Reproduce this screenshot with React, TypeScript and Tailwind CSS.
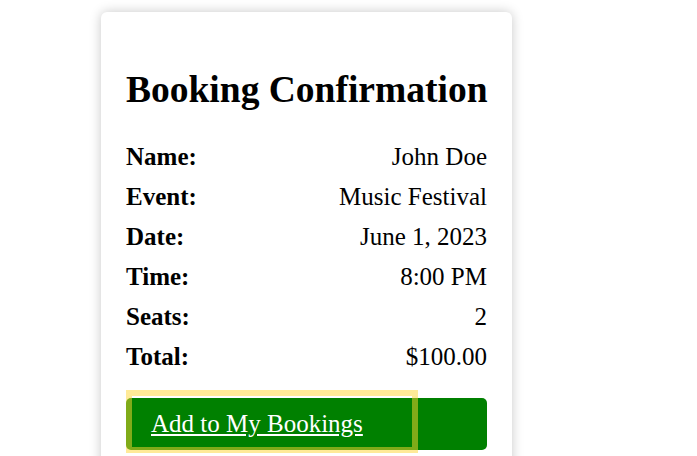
const rows = [
  ["Name:", "John Doe"],
  ["Event:", "Music Festival"],
  ["Date:", "June 1, 2023"],
  ["Time:", "8:00 PM"],
  ["Seats:", "2"],
  ["Total:", "$100.00"],
];

export default function App() {
  return (
    <div className="min-h-[456px] bg-white pt-[12px] font-['Liberation_Serif',serif] text-black">
      <div className="ml-[101px] w-[411px] rounded-[6px] bg-white px-[25px] pt-[57px] pb-[30px] shadow-[0_0_12px_rgba(0,0,0,0.22)]">
        <h1 className="mb-[32px] whitespace-nowrap text-[37.5px] font-bold leading-[42px]">Booking Confirmation</h1>
        <div className="flex flex-col gap-[12px]">
          {rows.map(([label, value]) => (
            <div key={label} className="flex justify-between text-[25px] leading-[28px]">
              <span className="font-bold">{label}</span>
              <span>{value}</span>
            </div>
          ))}
        </div>
        <div className="relative mt-[27px]">
          <a href="#" className="block rounded-[5px] bg-[#008000] px-[25px] py-[12px] text-[25px] leading-[28px] text-white underline">
            Add to My Bookings
          </a>
          <div className="pointer-events-none absolute left-0 top-[-8px] h-[63px] w-[292px] border-[6px] border-[rgba(255,213,50,0.5)]" />
        </div>
      </div>
    </div>
  );
}
